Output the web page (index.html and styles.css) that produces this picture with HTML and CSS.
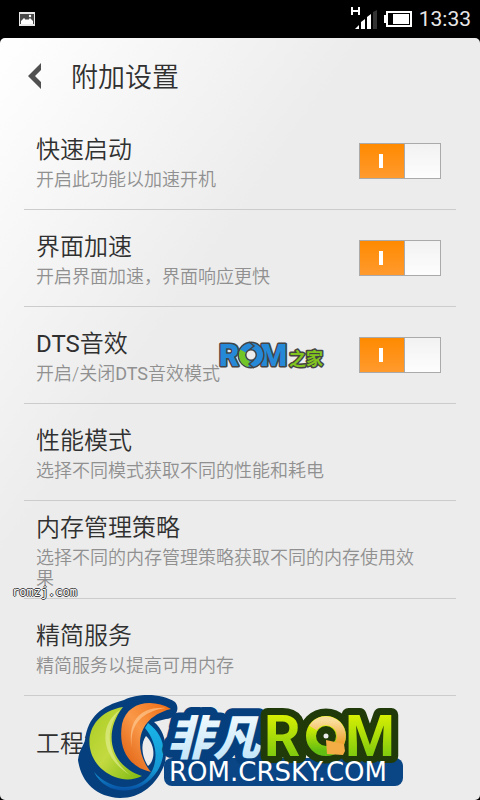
FILE: index.html
```html
<!DOCTYPE html>
<html lang="zh-CN">
<head>
<meta charset="utf-8">
<meta name="viewport" content="width=device-width, initial-scale=1">
<title>附加设置</title>
<link rel="stylesheet" href="styles.css">
</head>
<body>
<header class="status">
  <svg class="status-photo" width="16" height="14" viewBox="0 0 16 14" aria-hidden="true"><path fill="#e8e8e8" d="M0 0h16v14H0z"/><path fill="#484848" d="M1 2h14v10H1z"/><path fill="#fff" d="M2 12V9l3-3 2 2 1-1 1 1 2-2 3 3v3z"/><circle cx="11" cy="4" r="1.2" fill="#fff"/></svg>
  <div class="status-right">
    <svg width="26" height="24" viewBox="0 0 26 24" aria-hidden="true"><path fill="#fff" d="M0 0h2v3h5V0h2v8H7V5H2v3H0zM4 22l4-4v4zM10 15l4-3v10h-4zM16 10l4-3v15h-4z"/><path fill="#333" d="M22 5l4-2v19h-4z"/></svg>
    <svg width="28" height="16" viewBox="0 0 28 16" aria-hidden="true"><path fill="#fff" fill-rule="evenodd" d="M2 0h26v16H2v-4H0V4h2zM4 2v12h22V2z"/><path fill="#fff" d="M9 3h16v10H9z"/></svg>
    <time class="clock">13:33</time>
  </div>
</header>
<main class="panel">
  <div class="title-bar">
    <button class="back" type="button" aria-label="返回"><svg width="14" height="26" viewBox="0 0 14 26" aria-hidden="true"><path fill="#505050" d="M13 0v7L7 13l6 6v7L0 13z"/></svg></button>
    <h1>附加设置</h1>
  </div>
  <ul class="list">
    <li class="row">
      <label class="text" for="boot"><span class="name">快速启动</span><span class="note">开启此功能以加速开机</span></label>
      <input class="switch" id="boot" type="checkbox" role="switch" checked>
    </li>
    <li class="row">
      <label class="text" for="ui"><span class="name">界面加速</span><span class="note">开启界面加速，界面响应更快</span></label>
      <input class="switch" id="ui" type="checkbox" role="switch" checked>
    </li>
    <li class="row">
      <label class="text" for="dts"><span class="name"><span class="latin">DTS</span>音效</span><span class="note">开启/关闭<span class="latin">DTS</span>音效模式</span></label>
      <input class="switch" id="dts" type="checkbox" role="switch" checked>
    </li>
    <li class="row"><a class="text" href="#performance"><span class="name">性能模式</span><span class="note">选择不同模式获取不同的性能和耗电</span></a></li>
    <li class="row"><a class="text" href="#memory"><span class="name">内存管理策略</span><span class="note">选择不同的内存管理策略获取不同的内存使用效果</span></a></li>
    <li class="row"><a class="text" href="#services"><span class="name">精简服务</span><span class="note">精简服务以提高可用内存</span></a></li>
    <li class="row"><a class="text" href="#engineer"><span class="name">工程模式</span></a></li>
  </ul>
</main>

<svg class="mark mark-home" width="114" height="36" viewBox="-2 -2 114 36" role="img" aria-label="ROM之家">
  <g class="home-latin"><text x="1" y="27">R</text><text x="42" y="27">M</text></g>
  <circle cx="33" cy="16" r="9" fill="none" stroke="#444" stroke-width="9"/>
  <circle cx="33" cy="16" r="9" fill="none" stroke="#2589d8" stroke-width="6"/>
  <path d="M31 25a9 9 0 0 1-6-13" fill="none" stroke="#72c526" stroke-width="6"/>
  <path d="M31 3l5 4-5 4M36 29l-5-4 5-4" fill="none" stroke="#444" stroke-width="1.5"/>
  <text class="home-cjk" x="71" y="26">之家</text>
</svg>

<div class="mark mark-url">romzj.com</div>

<svg class="mark mark-sky" width="330" height="110" viewBox="0 0 330 110" role="img" aria-label="非凡ROM ROM.CRSKY.COM">
  <defs>
    <linearGradient id="lime" x1="0" y1="0" x2="0" y2="1"><stop offset="0" stop-color="#f0fa00"/><stop offset="1" stop-color="#62bd12"/></linearGradient>
    <linearGradient id="leaf" x1="0" y1="0" x2="1" y2="1"><stop offset="0" stop-color="#a9cc22"/><stop offset=".5" stop-color="#c3da40"/><stop offset="1" stop-color="#7cb810"/></linearGradient>
    <linearGradient id="flame" x1="1" y1="0" x2="0" y2="1"><stop offset="0" stop-color="#f06b12"/><stop offset=".5" stop-color="#f99848"/><stop offset="1" stop-color="#dc5708"/></linearGradient>
    <linearGradient id="sea" x1="0" y1="0" x2="0" y2="1"><stop offset="0" stop-color="#19b4e8"/><stop offset=".7" stop-color="#1597d3"/><stop offset="1" stop-color="#0750a4"/></linearGradient>
    <linearGradient id="ice" x1="0" y1="0" x2="0" y2="1"><stop offset="0" stop-color="#fff"/><stop offset="1" stop-color="#b9e2f8"/></linearGradient>
    <linearGradient id="gold" x1="0" y1="0" x2="0" y2="1"><stop offset="0" stop-color="#f9dd9b"/><stop offset="1" stop-color="#f0a02c"/></linearGradient>
  </defs>
  <path fill="#063f7e" d="M2 70C3 60 8 55 9 50C12 26 26 16 48 10C62 3 86 3 99 12C105 19 99 29 90 29L78 32C88 40 92 55 89 73C81 95 65 108 44 108C20 107 5 92 2 70z"/>
  <path fill="url(#sea)" d="M72 33C88 45 92 62 82 80C66 107 30 107 18 82C30 95 45 100 60 95C82 87 86 58 69 38z"/>
  <path fill="#ececec" d="M70 46C64 54 66 67 72 76C80 70 79 54 70 46z"/>
  <path fill="url(#leaf)" d="M47 17C10 23 4 61 27 80C39 90 54 92 66 86C35 76 26 44 47 17z"/>
  <path fill="#e4f098" opacity=".6" d="M44 20C23 34 23 66 54 85C33 68 26 43 44 20z"/>
  <path fill="url(#flame)" d="M95 19C76 8 51 12 46 34C42 58 52 77 75 82C58 62 58 28 95 19z"/>
  <path fill="#ffd09b" opacity=".6" d="M90 18C62 16 51 34 56 58C53 34 67 21 90 18z"/>
  <rect x="88" y="68" width="239" height="28" rx="8" fill="#0a4686"/>
  <g class="sky-cjk"><text x="91" y="65">非</text><text x="137" y="65">凡</text></g>
  <circle cx="250" cy="46" r="15" fill="none" stroke="#203b09" stroke-width="25"/>
  <g class="sky-rom"><text x="188" y="66">R</text><text x="269" y="66">M</text></g>
  <circle cx="250" cy="46" r="15" fill="none" stroke="url(#lime)" stroke-width="10"/>
  <path d="M237 38A15 15 0 0 1 263 54" fill="none" stroke="url(#gold)" stroke-width="9"/>
  <path fill="#f3ad44" d="M250 50l18 4 1 7-2 4-16-1z"/>
  <text class="sky-url" x="93" y="91">ROM.CRSKY.COM</text>
</svg>
</body>
</html>
```
FILE: styles.css
```css
* { box-sizing: border-box; }

body {
  margin: 0;
  min-height: 100vh;
  display: flex;
  flex-direction: column;
  position: relative;
  background: #000;
  color: #303030;
  font-family: Roboto, "Noto Sans CJK SC", sans-serif;
  font-weight: 350;
  overflow-x: hidden;
}

.status {
  height: 38px;
  padding: 0 9px 0 19px;
  display: flex;
  align-items: center;
  justify-content: space-between;
}

.status-right {
  display: flex;
  align-items: center;
  gap: 7px;
}

.clock {
  color: #e8e8e8;
  font-size: 21px;
  font-weight: 400;
  line-height: 40px;
}

.panel {
  flex: 1;
  border-radius: 5px;
  background: linear-gradient(125deg, #fff 0, #ececec 300px);
}

.title-bar {
  height: 75px;
  padding-left: 24px;
  display: flex;
  align-items: center;
  gap: 25px;
}

.back {
  width: 22px;
  padding: 0 4px;
  border: 0;
  background: none;
  line-height: 0;
}

h1 {
  margin: 0;
  font-size: 27px;
  font-weight: 350;
}

.list {
  margin: 0 24px;
  padding: 0;
  list-style: none;
}

.row {
  min-height: 97px;
  padding: 0 15px 0 12px;
  display: flex;
  align-items: center;
  justify-content: space-between;
  border-bottom: 1px solid #ccc;
}

.row:last-child { border-bottom: 0; }

.text {
  max-width: 382px;
  padding: 8px 0 9px;
  display: flex;
  flex-direction: column;
  color: inherit;
  text-decoration: none;
}

.name {
  font-size: 24px;
  line-height: 38px;
}

.note {
  color: #909090;
  font-size: 18px;
  line-height: 21px;
}

.latin { font-weight: 400; }

.switch {
  appearance: none;
  flex: none;
  width: 82px;
  height: 36px;
  margin: 0;
  border: 1px solid #aaa;
  background:
    linear-gradient(#fff, #fff) 19px 10px / 4px 14px no-repeat,
    linear-gradient(#ff8a00, #ff9a2e) 0 0 / 44px 100% no-repeat,
    linear-gradient(#aaa, #aaa) 44px 0 / 1px 100% no-repeat,
    linear-gradient(#f2f2f2, #fdfdfd);
}

.mark {
  position: absolute;
  pointer-events: none;
}

.mark-home { left: 216px; top: 337px; }
.mark-url {
  left: 12px;
  top: 584px;
  color: #fff;
  font: 12px/16px "DejaVu Sans Mono", monospace;
  text-shadow: 1px 0 #444, -1px 0 #444, 0 1px #444, 0 -1px #444;
}
.mark-sky { left: 76px; top: 690px; }

.home-latin, .home-cjk {
  paint-order: stroke;
  stroke: #444;
  stroke-width: 3px;
  stroke-linejoin: round;
}
.home-latin { fill: #2589d8; font: 900 31px Roboto, sans-serif; }
.home-cjk { fill: #82c51e; font: 700 17px "Noto Sans CJK SC", sans-serif; }

.sky-cjk {
  fill: url(#ice);
  stroke: #063f7e;
  stroke-width: 16px;
  stroke-linejoin: round;
  paint-order: stroke;
  font: italic 900 47px "Noto Sans CJK SC", sans-serif;
}
.sky-rom {
  fill: url(#lime);
  stroke: #203b09;
  stroke-width: 14px;
  stroke-linejoin: round;
  paint-order: stroke;
  font: bold 57px Roboto, sans-serif;
}
.sky-url { fill: #fff; font: 26px "DejaVu Sans", sans-serif; }
```
